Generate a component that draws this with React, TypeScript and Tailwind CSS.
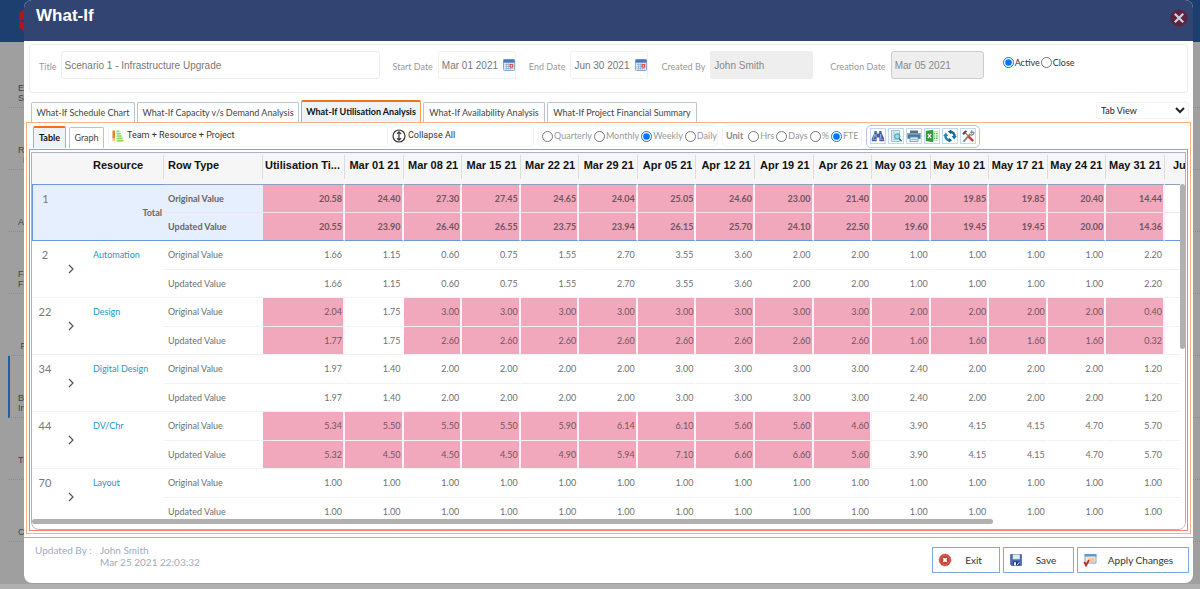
import type { ReactNode } from "react";

const PT = "font-['Lato','Noto_Sans',sans-serif]";

const dates = [
  "Mar 01 21", "Mar 08 21", "Mar 15 21", "Mar 22 21", "Mar 29 21", "Apr 05 21", "Apr 12 21",
  "Apr 19 21", "Apr 26 21", "May 03 21", "May 10 21", "May 17 21", "May 24 21", "May 31 21",
];

type Group = { id: number; name: string; original: string; updated: string; hot: string };

// `hot` holds one flag per value column: x = over-allocated
const groups: Group[] = [
  {
    id: 1, name: "Total", hot: "xxxxxxxxxxxxxxx",
    original: "20.58 24.40 27.30 27.45 24.65 24.04 25.05 24.60 23.00 21.40 20.00 19.85 19.85 20.40 14.44",
    updated: "20.55 23.90 26.40 26.55 23.75 23.94 26.15 25.70 24.10 22.50 19.60 19.45 19.45 20.00 14.36",
  },
  {
    id: 2, name: "Automation", hot: "---------------",
    original: "1.66 1.15 0.60 0.75 1.55 2.70 3.55 3.60 2.00 2.00 1.00 1.00 1.00 1.00 2.20",
    updated: "1.66 1.15 0.60 0.75 1.55 2.70 3.55 3.60 2.00 2.00 1.00 1.00 1.00 1.00 2.20",
  },
  {
    id: 22, name: "Design", hot: "x-xxxxxxxxxxxxx",
    original: "2.04 1.75 3.00 3.00 3.00 3.00 3.00 3.00 3.00 3.00 2.00 2.00 2.00 2.00 0.40",
    updated: "1.77 1.75 2.60 2.60 2.60 2.60 2.60 2.60 2.60 2.60 1.60 1.60 1.60 1.60 0.32",
  },
  {
    id: 34, name: "Digital Design", hot: "---------------",
    original: "1.97 1.40 2.00 2.00 2.00 2.00 3.00 3.00 3.00 3.00 2.40 2.00 2.00 2.00 1.20",
    updated: "1.97 1.40 2.00 2.00 2.00 2.00 3.00 3.00 3.00 3.00 2.40 2.00 2.00 2.00 1.20",
  },
  {
    id: 44, name: "DV/Chr", hot: "xxxxxxxxxx-----",
    original: "5.34 5.50 5.50 5.50 5.90 6.14 6.10 5.60 5.60 4.60 3.90 4.15 4.15 4.70 5.70",
    updated: "5.32 4.50 4.50 4.50 4.90 5.94 7.10 6.60 6.60 5.60 3.90 4.15 4.15 4.70 5.70",
  },
  {
    id: 70, name: "Layout", hot: "---------------",
    original: "1.00 1.00 1.00 1.00 1.00 1.00 1.00 1.00 1.00 1.00 1.00 1.00 1.00 1.00 1.00",
    updated: "1.00 1.00 1.00 1.00 1.00 1.00 1.00 1.00 1.00 1.00 1.00 1.00 1.00 1.00 1.00",
  },
];

function CalendarIcon() {
  return (
    <svg viewBox="0 0 12 12" className="size-3">
      <rect x="0.5" y="0.5" width="11" height="11" rx="0.8" fill="#dbe6f7" stroke="#8aa6d3" />
      <rect x="0.5" y="0.5" width="11" height="3.2" fill="#4a79c4" />
      <path d="M2 5.5h8M2 7.5h8M2 9.5h8M3.5 4.5v6M5.5 4.5v6M7.5 4.5v6" stroke="#8aa4d0" strokeWidth="0.6" />
      <rect x="6.6" y="5" width="3.6" height="3.6" fill="#e0553f" />
      <rect x="7.8" y="6.2" width="1.2" height="1.2" fill="#fff" />
    </svg>
  );
}

function TeamIcon() {
  return (
    <svg viewBox="0 0 12 12" className="size-3 shrink-0">
      <rect x="0.5" y="0.5" width="2.4" height="7.5" fill="#ee7a1c" />
      <rect x="0.5" y="8" width="2.4" height="3" fill="#f7c25c" />
      <path d="M4.5 1.2h3M4.5 3.6h4.2M4.5 6h5.2M4.5 8.4h6.2M4.5 10.8h7" stroke="#8ed65a" strokeWidth="1.6" />
    </svg>
  );
}

function CollapseIcon() {
  return (
    <svg viewBox="0 0 14 14" className="size-3.5" fill="none" stroke="#333">
      <circle cx="7" cy="7" r="6" strokeWidth="1.2" />
      <path d="M7 2.8v8.4M4.9 4.9 7 2.8l2.1 2.1M4.9 9.1 7 11.2l2.1-2.1" strokeWidth="1.2" />
    </svg>
  );
}

function BinocularsIcon() {
  return (
    <svg viewBox="0 0 14 14" className="size-3.5">
      <path d="M3.6 2h2.2v2.6H8.2V2h2.2l.4 2.4 2.4 5.2v2.6H8.4V8.4H5.6v3.8H.8V9.6l2.4-5.2z" fill="#42609e" />
      <path d="M3.9 5 2.4 9.6M9.6 5l.2 4.6M5 5v3" stroke="#b6c7ea" strokeWidth="0.9" />
      <path d="M1.4 10.4h3.6M9 10.4h3.6" stroke="#8fa7d8" strokeWidth="0.9" />
    </svg>
  );
}

function PreviewIcon() {
  return (
    <svg viewBox="0 0 14 14" className="size-3.5">
      <path d="M2.5 1.5h8v11h-8z" fill="#dcebf0" stroke="#9dbfcb" />
      <path d="M4 4h2M4 6h1.4M4 8h1.2M4 10.4h3" stroke="#8db4c2" strokeWidth="0.7" />
      <circle cx="8.2" cy="7.4" r="2.7" fill="#8fdbe8" stroke="#3f9ab2" />
      <path d="m10.2 9.6 2.4 2.6" stroke="#2c7790" strokeWidth="1.5" />
    </svg>
  );
}

function PrinterIcon() {
  return (
    <svg viewBox="0 0 14 14" className="size-3.5">
      <rect x="3" y="1.5" width="8" height="3" fill="#5d6f7b" />
      <path d="M.4 4.2h13.2v5.6H.4z" fill="#47799b" />
      <path d="M.4 4.2h13.2v1.4H.4z" fill="#7fa9c4" />
      <path d="M3 8h8v4.6H3z" fill="#d8effa" stroke="#5b8fb0" strokeWidth="0.8" />
      <path d="M4.4 10.3h5.2" stroke="#6fb4d6" strokeWidth="1" />
    </svg>
  );
}

function ExcelIcon() {
  return (
    <svg viewBox="0 0 14 14" className="size-3.5">
      <path d="M8 2.6h5v8.8H8z" fill="#e4f5e2" stroke="#a5d8a2" strokeWidth="0.6" />
      <path d="M8.8 4.6h1.4M11 4.6h1.4M8.8 7h1.4M11 7h1.4M8.8 9.4h1.4M11 9.4h1.4" stroke="#5cb85c" strokeWidth="1.2" />
      <path d="M.8 2 8.2.8v12.4L.8 12z" fill="#2f9a3c" />
      <path d="m2.8 4.8 3.4 4.4M6.2 4.8 2.8 9.2" stroke="#fff" strokeWidth="1.2" />
    </svg>
  );
}

function RefreshIcon() {
  return (
    <svg viewBox="0 0 14 14" className="size-3.5">
      <path d="M7.6 2.7a4.4 4.4 0 0 1 3.9 4.6" fill="none" stroke="#1c6f9c" strokeWidth="2.6" />
      <path d="M8.6 7h5.2l-2.7 3.6z" fill="#1c6f9c" />
      <path d="M6.4 11.4a4.4 4.4 0 0 1-3.9-4.6" fill="none" stroke="#2387b5" strokeWidth="2.6" />
      <path d="M.2 7h5.2L2.8 3.4z" fill="#2387b5" />
      <path d="M8.2.4v4.8L4.8 2.8zM5.8 13.6V8.9l3.4 2.3z" fill="#175a80" />
    </svg>
  );
}

function ToolsIcon() {
  return (
    <svg viewBox="0 0 14 14" className="size-3.5" fill="none">
      <path d="m9.4 4.8-7 7.8" stroke="#7d8891" strokeWidth="1.8" />
      <path d="M13 3.2a2.6 2.6 0 0 1-4 2.4M12.4 2.6 10.8 4.2l-1-1 1.5-1.7" stroke="#7d8891" strokeWidth="1.2" />
      <path d="m4.2 3.6 3.6 4" stroke="#9b7b6a" strokeWidth="1.4" />
      <path d="m7.4 7.4 4.8 4.8" stroke="#dd3b30" strokeWidth="2.5" />
      <path d="M1.2 4.4 4 1.4l2.4.6-3.6 4z" fill="#4b5359" />
    </svg>
  );
}

function ExitIcon() {
  return (
    <svg viewBox="0 0 14 14" className="size-3.5">
      <circle cx="7" cy="7" r="6" fill="#cf4a38" stroke="#b53a2b" strokeWidth="0.6" strokeDasharray="2 1" />
      <circle cx="7" cy="7" r="4.2" fill="#b93526" stroke="#e88d80" strokeWidth="0.5" />
      <path d="m5.2 5.2 3.6 3.6M8.8 5.2 5.2 8.8" stroke="#fff" strokeWidth="1.9" />
    </svg>
  );
}

function SaveIcon() {
  return (
    <svg viewBox="0 0 14 14" className="size-3.5">
      <path d="M1.5 1.5h11v11h-10l-1-1z" fill="#4a6cb8" stroke="#34519a" strokeWidth="0.6" />
      <path d="M3.8 1.5h7v4.8h-7z" fill="#dfe9f8" />
      <path d="M4.2 8.4h6.2v4.1H4.2z" fill="#24386e" />
      <path d="M5 9.2h2v3.3H5z" fill="#f2f5fb" />
      <path d="M8.2 12.3 10 9.4" stroke="#e8eefa" strokeWidth="1" />
    </svg>
  );
}

function ApplyIcon() {
  return (
    <svg viewBox="0 0 14 14" className="size-3.5">
      <path d="M2 1.5h11v8.6H2z" fill="#f6e6cf" stroke="#7ea9d8" />
      <path d="M1.6 1.1h11.8v2.4H1.6z" fill="#5b9add" />
      <path d="M6 6h5.4M7 8h4.4" stroke="#d9a76a" strokeWidth="0.9" />
      <path d="m1.2 8.8 1.9 3.6L6 6.8" fill="none" stroke="#c9281d" strokeWidth="1.8" />
    </svg>
  );
}

const toolButtons: [string, ReactNode][] = [
  ["Find", <BinocularsIcon />],
  ["Preview", <PreviewIcon />],
  ["Print", <PrinterIcon />],
  ["Export to Excel", <ExcelIcon />],
  ["Refresh", <RefreshIcon />],
  ["Settings", <ToolsIcon />],
];

function Radio({ group, label, checked }: { group: string; label: string; checked?: boolean }) {
  return (
    <label className="flex items-center gap-px">
      <input type="radio" name={group} defaultChecked={checked} className="m-0 size-[11px] accent-[#0075ff]" />
      {label}
    </label>
  );
}

function Tab({ label, active, className = "" }: { label: string; active?: boolean; className?: string }) {
  return (
    <button
      type="button"
      role="tab"
      aria-selected={!!active}
      className={
        (active
          ? "border border-b-0 border-t-2 border-[#ff9a55] border-t-[#f96e10] bg-[#edf3f7] font-bold text-[#111] "
          : "border border-b-0 border-[#bcc2d0] bg-white text-[#444] ") +
        "flex items-center justify-center whitespace-nowrap rounded-t-[2px] " + className
      }
    >
      {label}
    </button>
  );
}

function DateField({ id, label, value }: { id: string; label: string; value: string }) {
  return (
    <div className="flex items-center gap-[5px]">
      <label htmlFor={id} className="whitespace-nowrap pt-[3px] text-[#999]">{label}</label>
      <div className="flex h-7 w-[78px] items-center rounded-[3px] border border-[#f0f0f0] pl-[3px]">
        <input id={id} defaultValue={value} className="w-[61px] min-w-0 font-['Liberation_Sans',sans-serif] text-[10px] text-[#777] outline-none" />
        <button type="button" aria-label={`Pick ${label}`}><CalendarIcon /></button>
      </div>
    </div>
  );
}

function ScenarioForm() {
  return (
    <section className="mx-[5px] mt-[3px] flex h-[49px] items-start rounded-[3px] border border-[#ececec] pl-[9px] pt-[6px] text-[9px]">
      <div className="flex items-center gap-1">
        <label htmlFor="title" className="pt-[3px] text-[#999]">Title</label>
        <input
          id="title"
          defaultValue="Scenario 1 - Infrastructure Upgrade"
          className="h-7 w-[319px] rounded-[3px] border border-[#ececec] px-[3px] font-['Liberation_Sans',sans-serif] text-[10px] text-[#777] outline-none"
        />
      </div>
      <div className="ml-[13px] flex"><DateField id="start" label="Start Date" value="Mar 01 2021" /></div>
      <div className="ml-[13px] flex"><DateField id="end" label="End Date" value="Jun 30 2021" /></div>
      <div className="ml-[13px] flex items-center gap-[5px]">
        <label htmlFor="by" className="whitespace-nowrap pt-[3px] text-[#999]">Created By</label>
        <input id="by" readOnly value="John Smith" className="h-7 w-[103px] rounded-[2px] bg-[#eee] px-1 font-['Liberation_Sans',sans-serif] text-[10px] text-[#888] outline-none" />
      </div>
      <div className="ml-[17px] flex items-center gap-[5px]">
        <label htmlFor="created" className="whitespace-nowrap pt-[3px] text-[#999]">Creation Date</label>
        <input id="created" readOnly value="Mar 05 2021" className="h-7 w-[93px] rounded-[3px] border border-[#ccc] bg-[#eee] px-[3px] font-['Liberation_Sans',sans-serif] text-[10px] text-[#888] outline-none" />
      </div>
      <div className="ml-[19px] flex gap-px pt-[5px] text-[#333]">
        <Radio group="state" label="Active" checked />
        <Radio group="state" label="Close" />
      </div>
    </section>
  );
}

function Toolbar() {
  return (
    <div className="flex h-[26px] shrink-0 items-center text-[9px]">
      <div role="tablist" className="ml-[6px] flex items-end gap-[3px] self-end pb-px">
        <Tab label="Table" active className="h-[22px] w-[33px]" />
        <Tab label="Graph" className="h-[21px] w-[35px]" />
      </div>
      <div className="ml-1 flex h-[22px] w-[284px] items-center rounded-[4px] border border-[#f4f4f4]">
        <button type="button" className="ml-[3px] flex h-[18px] w-[276px] items-center gap-[3px] rounded-[3px] border-r border-[#f0f0f0] font-['Roboto',sans-serif] text-[#333]">
          <TeamIcon />
          Team + Resource + Project
        </button>
      </div>
      <button type="button" className="flex h-[22px] w-[142px] items-center gap-[2px] rounded-[4px] border border-l-0 border-[#f4f4f4] font-['Roboto',sans-serif] text-[#333]">
        <CollapseIcon />
        Collapse All
      </button>
      <fieldset className="ml-1 flex h-[22px] w-[179px] items-center gap-[2px] rounded-[4px] border border-[#f4f4f4] pl-[3px] text-[#999]">
        <Radio group="period" label="Quarterly" />
        <Radio group="period" label="Monthly" />
        <Radio group="period" label="Weekly" checked />
        <Radio group="period" label="Daily" />
      </fieldset>
      <fieldset className="ml-1 flex h-[22px] w-[140px] items-center gap-[2px] rounded-[4px] border border-[#f4f4f4] pl-[3px] text-[#999]">
        <b className="mr-[3px] text-[#888]">Unit</b>
        <Radio group="unit" label="Hrs" />
        <Radio group="unit" label="Days" />
        <Radio group="unit" label="%" />
        <Radio group="unit" label="FTE" checked />
      </fieldset>
      <div className="ml-1 flex h-[23px] items-center gap-[2px] rounded-[5px] border border-[#bcc2dc] px-[3px]">
        {toolButtons.map(([name, icon]) => (
          <button key={name} type="button" aria-label={name} className="flex size-4 items-center justify-center border border-[#c3d9f0]">
            {icon}
          </button>
        ))}
      </div>
    </div>
  );
}

function ValueRow({ group, kind }: { group: Group; kind: "original" | "updated" }) {
  const total = group.name === "Total";
  const first = kind === "original";
  const edge = total
    ? first ? "border-t border-t-[#8ea0bd] border-b border-b-[#f0e4ea] " : "border-b border-b-[#6d98e0] "
    : "border-b border-b-[#f1f1f1] ";
  return (
    <tr className={(first ? "h-[29px] " : "h-7 ") + (total ? "font-bold" : "")}>
      {first && (
        <>
          <td rowSpan={2} className={(total ? "border-y border-l border-y-[#6d98e0] border-l-[#6d98e0] bg-[#e6effd] " : "border-b border-[#f1f1f1] ") + "pt-[6px] text-center align-top text-[11px] font-normal text-[#777]"}>
            {group.id}
          </td>
          <td rowSpan={2} className={(total ? "border-y border-[#6d98e0] bg-[#e6effd] " : "border-b border-[#f1f1f1] ") + "align-middle"}>
            {!total && (
              <button type="button" aria-label={`Expand ${group.name}`} className="mx-auto block size-[10px]">
                <svg viewBox="0 0 10 10" className="size-[10px]" fill="none" stroke="#555" strokeWidth="1.2">
                  <path d="m3 1 4 4-4 4" />
                </svg>
              </button>
            )}
          </td>
          <td rowSpan={2} className={total ? "border-y border-[#6d98e0] bg-[#e6effd] pr-[2px] text-right align-middle text-[#666]" : "border-b border-[#f1f1f1] pl-[10px] pt-[7px] align-top"}>
            {total ? "Total" : <a href="#resource" className="block text-[#2698c8]">{group.name}</a>}
          </td>
        </>
      )}
      <td className={edge + (total ? "bg-[#e6effd] text-[#666] " : "text-[#707070] ") + "pl-1"}>
        {first ? "Original Value" : "Updated Value"}
      </td>
      {group[kind].split(" ").map((value, i) => (
        <td
          key={i}
          className={
            edge + "border-r-2 pr-[1px] text-right " +
            (group.hot[i] === "x" ? "border-r-[#fbf3f7] bg-[#f2a8bc] bg-clip-padding text-[#735560]" : "border-r-white text-[#707070]")
          }
        >
          {value}
        </td>
      ))}
      <td className={edge} />
    </tr>
  );
}

function UtilisationGrid() {
  const th = "relative h-[31px] whitespace-nowrap bg-[#f6f6f6] pb-[6px] font-bold after:absolute after:right-0 after:top-[2px] after:h-[24px] after:w-px after:bg-[#ddd]";
  return (
    <div className="relative mx-px mb-0 mt-[2px] flex min-h-0 flex-1 flex-col overflow-hidden rounded-b-[8px] border border-[#a9b2cc] pb-[10px]">
      <div className="min-h-0 flex-1 overflow-hidden">
        <table className="w-full table-fixed border-separate border-spacing-0 text-[9px]">
          <colgroup>
            <col className="w-[26px]" />
            <col className="w-[25px]" />
            <col className="w-[81px]" />
            <col className="w-[99px]" />
            <col className="w-[82px]" />
            {dates.map((d) => <col key={d} />)}
            <col className="w-[20px]" />
          </colgroup>
          <thead className="font-['Liberation_Sans',sans-serif] text-[11px] text-[#111]">
            <tr>
              <th colSpan={3} className={th + " pl-[61px] text-left"}>Resource</th>
              <th className={th + " pl-1 text-left"}>Row Type</th>
              <th className={th + " pl-[2px] text-left"}>Utilisation Ti...</th>
              {dates.map((d) => (
                <th key={d} className={th + " pr-[4px] text-right"}>{d}</th>
              ))}
              <th className="overflow-hidden whitespace-nowrap bg-[#f6f6f6] pb-[6px] pl-2 text-left font-bold">Ju</th>
            </tr>
          </thead>
          <tbody>
            {groups.flatMap((g) => [
              <ValueRow key={g.id + "o"} group={g} kind="original" />,
              <ValueRow key={g.id + "u"} group={g} kind="updated" />,
            ])}
          </tbody>
        </table>
      </div>
      <div className="absolute bottom-0 right-0 top-[31px] w-[5px] bg-white">
        <div className="h-[165px] rounded-full bg-[#b0b0b0]" />
      </div>
      <div className="absolute bottom-[5px] left-0 h-[5px] w-5/6 rounded-full bg-[#b0b0b0]" />
    </div>
  );
}

function Footer() {
  const button = "flex h-[26px] items-center border border-[#7faae6] bg-white pl-[5px] text-[10px] text-[#333]";
  return (
    <footer className="mt-[3px] flex h-[46px] shrink-0 border-t border-[#8fb4e8] pl-[11px] pr-1 text-[10px] leading-[12px] text-[#a0aabf]">
      <div className="w-[65px] pt-[6px]">Updated By :</div>
      <div className="flex-1 pt-[6px]">
        John Smith<br />
        Mar 25 2021 22:03:32
      </div>
      <div className="flex gap-[3px] pt-[9px]">
        <button type="button" className={button + " w-[68px]"}><ExitIcon /><span className="flex-1 pr-1">Exit</span></button>
        <button type="button" className={button + " w-[71px]"}><SaveIcon /><span className="flex-1 pr-1">Save</span></button>
        <button type="button" className={button + " w-[112px]"}><ApplyIcon /><span className="flex-1 pr-1">Apply Changes</span></button>
      </div>
    </footer>
  );
}

const navItems = [
  { lines: ["", "En", "Se"], active: false },
  { lines: ["", "Re", "  P"], active: false },
  { lines: ["", "", "A"], active: false },
  { lines: ["", "Fo", "Fi"], active: false },
  { lines: ["", "", " P"], active: false },
  { lines: ["", "B", "In"], active: true },
  { lines: ["", "Ti", ""], active: false },
  { lines: ["", "", "C"], active: false },
];

function Backdrop() {
  return (
    <div className="flex min-h-screen flex-col bg-[#9f9f9f]">
      <div className="h-[42px] bg-[#1c3f70]">
        <svg viewBox="0 0 12 24" className="ml-[18px] mt-2 h-6 w-3">
          <path d="M1 5 6 1h6v9l-11 3zM1 14l11-1v11H6l-5-5z" fill="#b5121f" />
          <path d="M0 13.2h7l5 3" stroke="#1c3f70" strokeWidth="1.2" fill="none" />
        </svg>
      </div>
      <nav className="ml-2 pt-1 font-['Liberation_Sans',sans-serif] text-[9px] leading-[10px] text-[#444]">
        {navItems.map((item, i) => (
          <div
            key={i}
            className={
              "flex h-[62px] flex-col justify-end whitespace-pre border-b border-dotted border-[#8a8a8a] pb-[4px] pl-2 " +
              (item.active ? "border-l-2 border-l-[#1d5ea8] [border-left-style:solid]" : "border-l-2 border-l-transparent")
            }
          >
            {item.lines.map((line, j) => <span key={j} className="min-h-[10px]">{line}</span>)}
          </div>
        ))}
      </nav>
    </div>
  );
}

export default function App() {
  return (
    <div className={"relative min-h-screen overflow-hidden " + PT}>
      <Backdrop />
      <div className="absolute inset-x-0 bottom-0 h-[5px] bg-[#b0b0b0]" />
      <div className="absolute inset-0 flex pb-[6px] pl-6 pr-[7px]">
        <main role="dialog" aria-labelledby="dialog-title" className="flex min-w-0 flex-1 flex-col overflow-hidden rounded-[8px] bg-white">
          <header className="flex h-[41px] shrink-0 items-start justify-between bg-[#314472] pl-3 pr-[5px] pt-[6px]">
            <h1 id="dialog-title" className="font-['Liberation_Sans',sans-serif] text-[17px] font-bold leading-5 text-white">What-If</h1>
            <button type="button" aria-label="Close" className="mt-[3px]">
              <svg viewBox="0 0 18 18" className="size-[18px]">
                <circle cx="9" cy="9" r="8.6" fill="#5e2340" />
                <path d="m4.8 4.8 8.4 8.4M13.2 4.8l-8.4 8.4" stroke="#c9cfe0" strokeWidth="2.3" />
              </svg>
            </button>
          </header>
          <ScenarioForm />
          <div className="mt-[7px] flex items-end pl-[7px] pr-1">
            <div role="tablist" className="flex flex-1 items-end gap-[2px] text-[9px]">
              <Tab label="What-If Schedule Chart" className="h-[20px] w-[104px]" />
              <Tab label="What-If Capacity v/s Demand Analysis" className="h-[20px] w-[162px]" />
              <Tab label="What-If Utilisation Analysis" active className="h-[22px] w-[120px]" />
              <Tab label="What-If Availability Analysis" className="h-[20px] w-[122px]" />
              <Tab label="What-If Project Financial Summary" className="h-[20px] w-[150px]" />
            </div>
            <select aria-label="View" className="mb-[3px] h-[17px] w-[93px] rounded-[3px] border border-[#f0f0f0] bg-white text-[9px] text-[#222]">
              <option>Tab View</option>
            </select>
          </div>
          <section className="mx-[2px] flex min-h-0 flex-1 flex-col border border-[#ffb27f]">
            <Toolbar />
            <div className="mx-[2px] mb-[2px] flex min-h-0 flex-1 flex-col border border-[#f77f7a]">
              <UtilisationGrid />
            </div>
          </section>
          <Footer />
        </main>
      </div>
    </div>
  );
}
